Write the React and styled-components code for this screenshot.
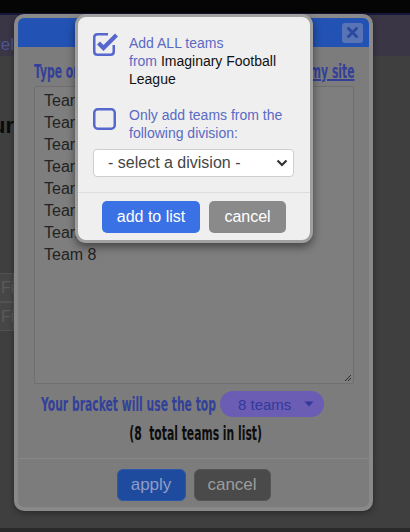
import React from "react";
import styled, { createGlobalStyle } from "styled-components";

const GlobalStyle = createGlobalStyle`
  html, body {
    margin: 0;
    padding: 0;
    width: 410px;
    height: 532px;
    overflow: hidden;
    background: #3f3f3f;
    font-family: "Liberation Sans", Arial, sans-serif;
  }
  #root { width: 410px; height: 532px; }
  * { box-sizing: border-box; }
`;

const Page = styled.div`
  position: relative;
  width: 410px;
  height: 532px;
  display: flex;
  flex-direction: column;
  overflow: hidden;
`;

const TopBar = styled.div`
  height: 13px;
  background: #050505;
`;

const NavLine = styled.div`
  height: 2px;
  background: #16173a;
`;

const NavStrip = styled.div`
  height: 41px;
  background: #3a3646;
  display: flex;
  align-items: flex-end;
`;

const Content = styled.div`
  flex: 1;
  background: #3f3f3f;
  display: flex;
`;

const BottomStrip = styled.div`
  height: 4px;
  background: #2a2a2a;
`;

const Sliver = styled.div`
  width: 14px;
  overflow: hidden;
  display: flex;
  flex-direction: column;
  align-items: ${(p) => (p.$end ? "flex-end" : "flex-start")};
  padding-top: ${(p) => p.$top || 0}px;
`;

const NavLink = styled.span`
  white-space: nowrap;
  font-size: 17px;
  line-height: 20px;
  color: #4b5595;
  padding-bottom: 1px;
`;

const Heading = styled.div`
  white-space: nowrap;
  font-size: 22px;
  font-weight: bold;
  line-height: 26px;
  color: #0b0b0b;
  align-self: flex-end;
`;

const GhostInput = styled.div`
  width: 14px;
  height: 29px;
  margin-top: ${(p) => p.$mt || 0}px;
  background: #464646;
  border: 1px solid #525252;
  border-left: none;
  color: #5a5a5a;
  font-size: 16px;
  line-height: 27px;
  padding-left: 1px;
  white-space: nowrap;
  overflow: hidden;
`;

/* ---------- first (dimmed) modal ---------- */

const Modal = styled.div`
  position: absolute;
  left: 14px;
  top: 14px;
  width: 359px;
  height: 497px;
  padding: 4px;
  border-radius: 10px;
  background: #898989;
  display: flex;
  flex-direction: column;
  box-shadow: 0 2px 6px rgba(0, 0, 0, 0.35);
`;

const ModalHeader = styled.div`
  height: 29px;
  background: #2252b3;
  border-radius: 6px 6px 0 0;
  display: flex;
  align-items: center;
  justify-content: flex-end;
  padding-right: 6px;
`;

const CloseBtn = styled.div`
  width: 21px;
  height: 20px;
  border-radius: 3px;
  background: #5874b6;
  display: flex;
  align-items: center;
  justify-content: center;
`;

const ModalBody = styled.div`
  flex: 1;
  background: #7c7c7c;
  border-radius: 0 0 6px 6px;
  display: flex;
  flex-direction: column;
`;

const BodyMain = styled.div`
  flex: 1;
  padding: 12px 15px 0 16px;
  display: flex;
  flex-direction: column;
`;

const Condensed = styled.span`
  display: inline-block;
  white-space: nowrap;
  font-family: "DejaVu Sans Condensed", "Liberation Sans", sans-serif;
  font-weight: bold;
  font-size: 20px;
  line-height: 24px;
  color: ${(p) => p.$color || "#33409a"};
  transform: scaleX(${(p) => p.$sx || 0.6});
  transform-origin: ${(p) => p.$origin || "left"} center;
  text-decoration: ${(p) => (p.$link ? "underline" : "none")};
`;

const LabelRow = styled.div`
  height: 24px;
  margin-bottom: 3px;
  display: flex;
  justify-content: space-between;
`;

const TextBox = styled.div`
  width: ${(p) => p.$w}px;
  display: flex;
  justify-content: ${(p) => p.$justify || "flex-start"};
`;

const TeamList = styled.div`
  position: relative;
  height: 298px;
  border: 1px solid #6f6f6f;
  border-radius: 2px;
  background: #7e7e7e;
  padding: 3px 9px;
`;

const TeamLine = styled.div`
  font-size: 16px;
  line-height: 22px;
  color: #232323;
`;

const Grip = styled.svg`
  position: absolute;
  right: 1px;
  bottom: 1px;
`;

const BracketRow = styled.div`
  margin-top: 7px;
  padding-left: 7px;
  display: flex;
  align-items: center;
  gap: 7px;
`;

const Pill = styled.div`
  width: 104px;
  height: 26px;
  border-radius: 13px;
  background: #6b5db4;
  display: flex;
  align-items: center;
  justify-content: space-between;
  padding: 0 10px 0 18px;
  font-size: 15px;
  color: #33399a;
`;

const CountLine = styled.div`
  margin-top: 4px;
  display: flex;
  justify-content: center;
  padding-left: 3px;
`;

const ModalFooter = styled.div`
  border-top: 1px solid #878787;
  padding: 10px 0 6px;
  display: flex;
  justify-content: center;
  gap: 8px;
`;

const DimButton = styled.div`
  height: 32px;
  width: ${(p) => p.$w}px;
  border-radius: 6px;
  background: ${(p) => p.$bg};
  border: 1px solid ${(p) => p.$border};
  color: ${(p) => p.$color};
  font-size: 17px;
  display: flex;
  align-items: center;
  justify-content: center;
`;

/* ---------- second (active) dialog ---------- */

const Dialog = styled.div`
  position: absolute;
  left: 75px;
  top: 14px;
  width: 238px;
  border: 3px solid #a0a0a0;
  border-radius: 11px;
  background: #efefef;
  box-shadow: 0 4px 8px rgba(0, 0, 0, 0.45);
  display: flex;
  flex-direction: column;
`;

const DialogMain = styled.div`
  padding: 16px 16px 15px 15px;
  display: flex;
  flex-direction: column;
`;

const OptionRow = styled.div`
  display: flex;
  align-items: flex-start;
  gap: ${(p) => p.$gap}px;
  margin-top: ${(p) => p.$mt || 0}px;
`;

const BoxIcon = styled.svg`
  flex: none;
  margin-top: ${(p) => p.$mt || 0}px;
`;

const OptionText = styled.div`
  font-size: 14px;
  line-height: 18px;
  color: #5a6ac4;
  margin-top: ${(p) => p.$mt || 0}px;
`;

const Dark = styled.span`
  color: #111;
`;

const SelectBox = styled.div`
  margin-top: 7px;
  height: 28px;
  background: #fff;
  border: 1px solid #cfcfcf;
  border-radius: 4px;
  display: flex;
  align-items: center;
  justify-content: space-between;
  padding: 0 5px 0 14px;
  font-size: 16px;
  color: #454545;
`;

const DialogFooter = styled.div`
  border-top: 1px solid #dedede;
  padding: 8px 0 7px;
  display: flex;
  justify-content: center;
  gap: 9px;
`;

const Button = styled.div`
  width: ${(p) => p.$w}px;
  height: 32px;
  border-radius: 5px;
  background: ${(p) => p.$bg};
  color: #fff;
  font-size: 16px;
  display: flex;
  align-items: center;
  justify-content: center;
`;

const teams = ["Team 1", "Team 2", "Team 3", "Team 4", "Team 5", "Team 6", "Team 7", "Team 8"];

export default function App() {
  return (
    <>
      <GlobalStyle />
      <Page>
        <TopBar />
        <NavLine />
        <NavStrip>
          <Sliver $end>
            <NavLink>Level</NavLink>
          </Sliver>
        </NavStrip>
        <Content>
          <Sliver $top={57}>
            <Heading>Your</Heading>
            <GhostInput $mt={134}>First</GhostInput>
            <GhostInput>First</GhostInput>
          </Sliver>
        </Content>
        <BottomStrip />

        <Modal>
          <ModalHeader>
            <CloseBtn>
              <svg width="11" height="11" viewBox="0 0 11 11">
                <path d="M1.5 1.5 L9.5 9.5 M9.5 1.5 L1.5 9.5" stroke="#2a4a9e" strokeWidth="3" strokeLinecap="round" />
              </svg>
            </CloseBtn>
          </ModalHeader>
          <ModalBody>
            <BodyMain>
              <LabelRow>
                <TextBox $w={80}>
                  <Condensed>Type or</Condensed>
                </TextBox>
                <TextBox $w={130} $justify="flex-end">
                  <Condensed $link $origin="right">from my site</Condensed>
                </TextBox>
              </LabelRow>
              <TeamList>
                {teams.map((t) => (
                  <TeamLine key={t}>{t}</TeamLine>
                ))}
                <Grip width="9" height="9" viewBox="0 0 9 9">
                  <path d="M8 2 L2 8 M8 5 L5 8" stroke="#2a2a2a" strokeWidth="1" />
                </Grip>
              </TeamList>
              <BracketRow>
                <TextBox $w={172}>
                  <Condensed>Your bracket will use the top</Condensed>
                </TextBox>
                <Pill>
                  <span>8 teams</span>
                  <svg width="10" height="6" viewBox="0 0 10 6">
                    <path d="M0.5 0.5 H9.5 L5 5.5 Z" fill="#33399a" />
                  </svg>
                </Pill>
              </BracketRow>
              <CountLine>
                <TextBox $w={130} $justify="center">
                  <Condensed $color="#0d0d0d" $origin="center">(8&nbsp; total teams in list)</Condensed>
                </TextBox>
              </CountLine>
            </BodyMain>
            <ModalFooter>
              <DimButton $w={69} $bg="#1f4b9f" $border="#2c58ab" $color="#8f9dc6">apply</DimButton>
              <DimButton $w={77} $bg="#4a4a4a" $border="#555" $color="#9d9d9d">cancel</DimButton>
            </ModalFooter>
          </ModalBody>
        </Modal>

        <Dialog>
          <DialogMain>
            <OptionRow $gap={10}>
              <BoxIcon width="26" height="23" viewBox="0 0 26 23">
                <path
                  d="M20.75 12 V18.5 Q20.75 21.75 17.5 21.75 H4.5 Q1.25 21.75 1.25 18.5 V4.5 Q1.25 1.25 4.5 1.25 H15"
                  fill="none"
                  stroke="#5667cd"
                  strokeWidth="2.5"
                />
                <path d="M5.5 10 L10.5 15 L23.5 2" fill="none" stroke="#5667cd" strokeWidth="4.2" />
              </BoxIcon>
              <OptionText $mt={1}>
                Add ALL teams
                <br />
                from <Dark>Imaginary Football League</Dark>
              </OptionText>
            </OptionRow>
            <OptionRow $gap={13} $mt={18}>
              <BoxIcon width="23" height="22" viewBox="0 0 23 22" $mt={2}>
                <rect x="1.25" y="1.25" width="20.5" height="19.5" rx="3.5" fill="none" stroke="#5667cd" strokeWidth="2.5" />
              </BoxIcon>
              <OptionText>Only add teams from the following division:</OptionText>
            </OptionRow>
            <SelectBox>
              <span>- select a division -</span>
              <svg width="12" height="8" viewBox="0 0 12 8">
                <path d="M1.5 1.5 L6 6 L10.5 1.5" fill="none" stroke="#333" strokeWidth="2.2" />
              </svg>
            </SelectBox>
          </DialogMain>
          <DialogFooter>
            <Button $w={98} $bg="#3a72e6">add to list</Button>
            <Button $w={77} $bg="#8a8a8a">cancel</Button>
          </DialogFooter>
        </Dialog>
      </Page>
    </>
  );
}
